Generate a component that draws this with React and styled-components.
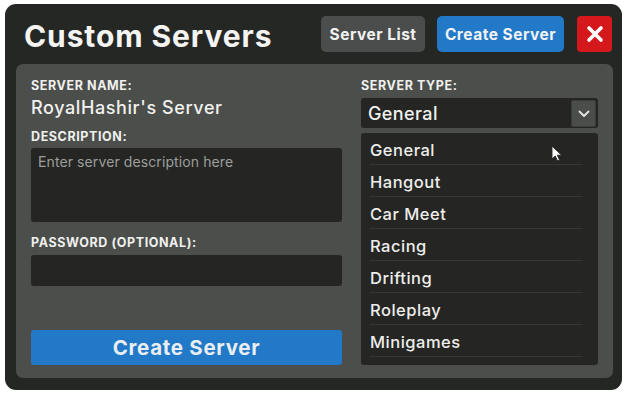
import styled, { createGlobalStyle } from "styled-components";

const GlobalStyle = createGlobalStyle`
  body {
    margin: 0;
    background: #ffffff;
    font-family: "Inter", "Liberation Sans", sans-serif;
  }
`;

const SERVER_TYPES = [
  "General",
  "Hangout",
  "Car Meet",
  "Racing",
  "Drifting",
  "Roleplay",
  "Minigames",
];

const App = () => {
  return (
    <>
      <GlobalStyle />
      <Window>
        <Header>
          <Title>Custom Servers</Title>
          <HeaderButtons>
            <TopButton $variant="gray">Server List</TopButton>
            <TopButton $variant="blue">Create Server</TopButton>
            <CloseButton>
              <svg width="18" height="18" viewBox="0 0 18 18">
                <path
                  d="M3 3 L15 15 M15 3 L3 15"
                  stroke="#fff"
                  strokeWidth="3.6"
                  strokeLinecap="round"
                />
              </svg>
            </CloseButton>
          </HeaderButtons>
        </Header>

        <Panel>
          <LeftColumn>
            <Label>Server Name:</Label>
            <ServerName>RoyalHashir's Server</ServerName>
            <Label $top={10}>Description:</Label>
            <TextArea>Enter server description here</TextArea>
            <Label $top={13}>Password (Optional):</Label>
            <Input />
            <SubmitButton>Create Server</SubmitButton>
          </LeftColumn>

          <RightColumn>
            <Label>Server Type:</Label>
            <Select>
              <span>General</span>
              <Chevron>
                <svg width="12" height="8" viewBox="0 0 12 8">
                  <path
                    d="M1.5 1.5 L6 6 L10.5 1.5"
                    stroke="#e6e6e6"
                    strokeWidth="1.8"
                    fill="none"
                    strokeLinecap="round"
                    strokeLinejoin="round"
                  />
                </svg>
              </Chevron>
            </Select>
            <OptionList>
              {SERVER_TYPES.map((type) => (
                <Option key={type}>{type}</Option>
              ))}
              <Cursor>
                <svg width="12" height="17" viewBox="0 0 12 17">
                  <path
                    d="M1 1 L1 14 L4.2 11 L6.6 16 L8.6 15 L6.3 10.2 L10.6 10.2 Z"
                    fill="#ffffff"
                    stroke="#222"
                    strokeWidth="0.9"
                  />
                </svg>
              </Cursor>
            </OptionList>
          </RightColumn>
        </Panel>
      </Window>
    </>
  );
};

export default App;

const Window = styled.div`
  margin: 4px 0 0 5px;
  width: 617px;
  height: 386px;
  box-sizing: border-box;
  background: #252725;
  border-radius: 11px;
  display: flex;
  flex-direction: column;
`;

const Header = styled.div`
  height: 60px;
  display: flex;
  align-items: flex-start;
  justify-content: space-between;
  padding: 12px 10px 0 19px;
  box-sizing: border-box;
`;

const Title = styled.h1`
  margin: 0;
  margin-top: 2px;
  color: #f4f4f2;
  font-size: 30px;
  font-weight: 700;
  line-height: 36px;
  letter-spacing: 0.9px;
`;

const HeaderButtons = styled.div`
  display: flex;
  gap: 12px;
`;

const TopButton = styled.button`
  height: 36px;
  padding: 0;
  width: ${(p) => (p.$variant === "blue" ? "127px" : "104px")};
  border: none;
  border-radius: 5px;
  background: ${(p) => (p.$variant === "blue" ? "#2179c8" : "#4a4d4b")};
  color: #f2f2f2;
  font-family: inherit;
  font-size: 15.5px;
  font-weight: 700;
  letter-spacing: 0.5px;
`;

const CloseButton = styled.button`
  width: 35px;
  height: 36px;
  padding: 0;
  margin-left: 1px;
  border: none;
  border-radius: 4px;
  background: #d4181c;
  display: flex;
  align-items: center;
  justify-content: center;
`;

const Panel = styled.div`
  flex: 1;
  margin: 0 9px 12px 11px;
  background: #4b4e4b;
  border-radius: 7px;
  padding: 14px 15px 13px 15px;
  display: flex;
  gap: 19px;
`;

const LeftColumn = styled.div`
  width: 311px;
  display: flex;
  flex-direction: column;
`;

const RightColumn = styled.div`
  flex: 1;
  display: flex;
  flex-direction: column;
`;

const Label = styled.div`
  margin-top: ${(p) => p.$top || 0}px;
  color: #f0f0ee;
  font-size: 12.5px;
  font-weight: 700;
  line-height: 16px;
  text-transform: uppercase;
  letter-spacing: 0.6px;
`;

const ServerName = styled.div`
  margin-top: 3px;
  color: #f2f2f0;
  font-size: 18px;
  font-weight: 500;
  line-height: 22px;
  letter-spacing: 0.6px;
`;

const TextArea = styled.div`
  margin-top: 3px;
  height: 74px;
  box-sizing: border-box;
  padding: 4px 7px;
  background: #252624;
  border-radius: 3px;
  color: #9c9e9b;
  font-size: 14px;
  line-height: 20px;
  letter-spacing: 0.1px;
`;

const Input = styled.div`
  margin-top: 4px;
  height: 31px;
  background: #252624;
  border-radius: 3px;
`;

const SubmitButton = styled.button`
  margin-top: auto;
  height: 35px;
  border: none;
  border-radius: 3px;
  background: #2179c8;
  color: #e9eef3;
  font-family: inherit;
  font-size: 20.5px;
  font-weight: 700;
  letter-spacing: 0.7px;
`;

const Select = styled.div`
  margin-top: 4px;
  height: 30px;
  box-sizing: border-box;
  background: #252624;
  border-radius: 3px;
  display: flex;
  align-items: center;
  justify-content: space-between;
  padding: 1px 2px 0 7px;
  color: #f2f2f0;
  font-size: 18px;
  font-weight: 500;
  letter-spacing: 0.4px;
`;

const Chevron = styled.div`
  width: 25px;
  height: 27px;
  box-sizing: border-box;
  background: #4a4d4a;
  border: 1px solid #3a3c3a;
  border-radius: 2px;
  display: flex;
  align-items: center;
  justify-content: center;
`;

const OptionList = styled.div`
  position: relative;
  margin-top: 5px;
  height: 232px;
  box-sizing: border-box;
  background: #252624;
  border-radius: 3px;
  padding: 0 15px 0 9px;
`;

const Option = styled.div`
  height: 32px;
  box-sizing: border-box;
  display: flex;
  align-items: center;
  padding-top: 2px;
  border-bottom: 1px solid #353735;
  color: #eeeeec;
  font-size: 16.5px;
  font-weight: 500;
  letter-spacing: 0.5px;
`;

const Cursor = styled.div`
  position: absolute;
  left: 190px;
  top: 12px;
  line-height: 0;
`;
